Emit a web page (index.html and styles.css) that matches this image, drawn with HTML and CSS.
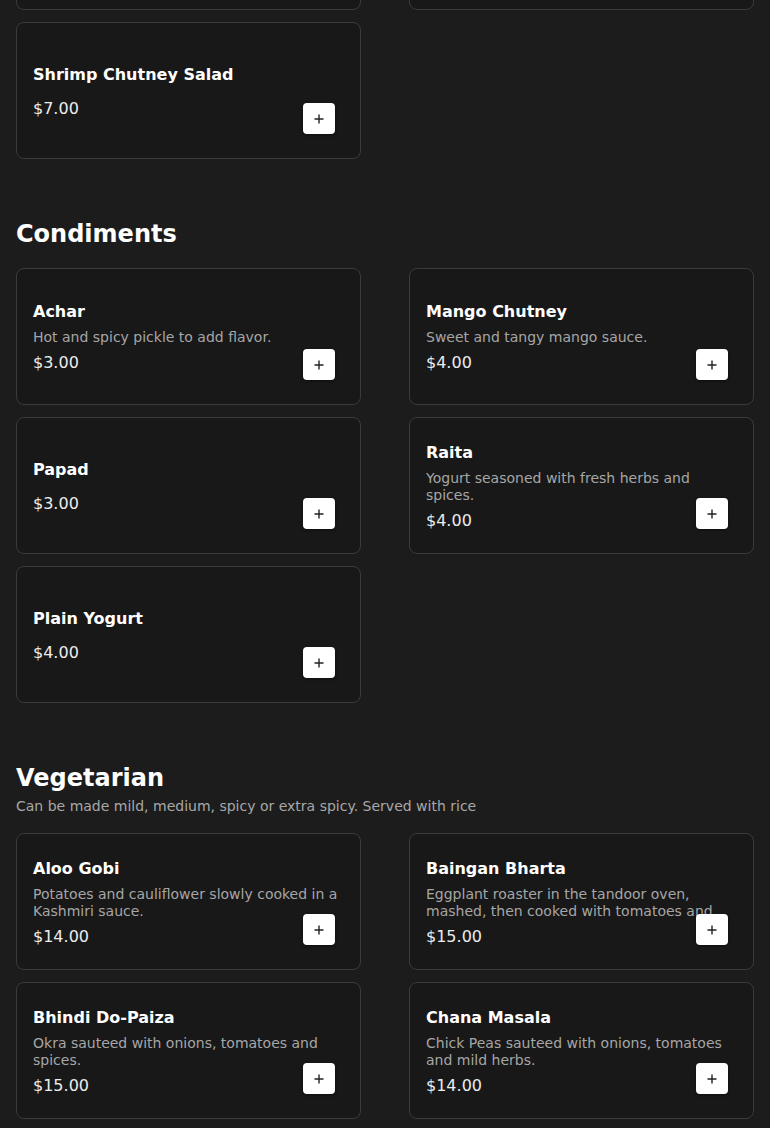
FILE: index.html
```html
<!DOCTYPE html>
<html lang="en">
<head>
<meta charset="utf-8">
<title>Menu</title>
<link rel="stylesheet" href="styles.css">
</head>
<body>
<main class="menu">
  <section class="section section-first">
    <div class="grid">
      <div class="card">
        <div class="card-body">
          <h3 class="item-name">Chicken Chutney Salad</h3>
          <p class="item-desc"></p>
          <p class="item-price">$7.00</p>
        </div>
        <button class="add" aria-label="Add"><svg viewBox="0 0 10 10" width="10" height="10"><path d="M5 0.5V9.5M0.5 5H9.5" stroke="#222" stroke-width="1.4" fill="none"/></svg></button>
      </div>
      <div class="card">
        <div class="card-body">
          <h3 class="item-name">Lamb Chutney Salad</h3>
          <p class="item-desc"></p>
          <p class="item-price">$7.00</p>
        </div>
        <button class="add" aria-label="Add"><svg viewBox="0 0 10 10" width="10" height="10"><path d="M5 0.5V9.5M0.5 5H9.5" stroke="#222" stroke-width="1.4" fill="none"/></svg></button>
      </div>
      <div class="card">
        <div class="card-body">
          <h3 class="item-name">Shrimp Chutney Salad</h3>
          <p class="item-desc"></p>
          <p class="item-price">$7.00</p>
        </div>
        <button class="add" aria-label="Add"><svg viewBox="0 0 10 10" width="10" height="10"><path d="M5 0.5V9.5M0.5 5H9.5" stroke="#222" stroke-width="1.4" fill="none"/></svg></button>
      </div>
    </div>
  </section>

  <section class="section">
    <header class="section-head">
      <h2 class="section-title">Condiments</h2>
    </header>
    <div class="grid">
      <div class="card">
        <div class="card-body">
          <h3 class="item-name">Achar</h3>
          <p class="item-desc">Hot and spicy pickle to add flavor.</p>
          <p class="item-price">$3.00</p>
        </div>
        <button class="add" aria-label="Add"><svg viewBox="0 0 10 10" width="10" height="10"><path d="M5 0.5V9.5M0.5 5H9.5" stroke="#222" stroke-width="1.4" fill="none"/></svg></button>
      </div>
      <div class="card">
        <div class="card-body">
          <h3 class="item-name">Mango Chutney</h3>
          <p class="item-desc">Sweet and tangy mango sauce.</p>
          <p class="item-price">$4.00</p>
        </div>
        <button class="add" aria-label="Add"><svg viewBox="0 0 10 10" width="10" height="10"><path d="M5 0.5V9.5M0.5 5H9.5" stroke="#222" stroke-width="1.4" fill="none"/></svg></button>
      </div>
      <div class="card">
        <div class="card-body">
          <h3 class="item-name">Papad</h3>
          <p class="item-desc"></p>
          <p class="item-price">$3.00</p>
        </div>
        <button class="add" aria-label="Add"><svg viewBox="0 0 10 10" width="10" height="10"><path d="M5 0.5V9.5M0.5 5H9.5" stroke="#222" stroke-width="1.4" fill="none"/></svg></button>
      </div>
      <div class="card">
        <div class="card-body">
          <h3 class="item-name">Raita</h3>
          <p class="item-desc">Yogurt seasoned with fresh herbs and spices.</p>
          <p class="item-price">$4.00</p>
        </div>
        <button class="add" aria-label="Add"><svg viewBox="0 0 10 10" width="10" height="10"><path d="M5 0.5V9.5M0.5 5H9.5" stroke="#222" stroke-width="1.4" fill="none"/></svg></button>
      </div>
      <div class="card">
        <div class="card-body">
          <h3 class="item-name">Plain Yogurt</h3>
          <p class="item-desc"></p>
          <p class="item-price">$4.00</p>
        </div>
        <button class="add" aria-label="Add"><svg viewBox="0 0 10 10" width="10" height="10"><path d="M5 0.5V9.5M0.5 5H9.5" stroke="#222" stroke-width="1.4" fill="none"/></svg></button>
      </div>
    </div>
  </section>

  <section class="section">
    <header class="section-head">
      <h2 class="section-title">Vegetarian</h2>
      <p class="section-sub">Can be made mild, medium, spicy or extra spicy. Served with rice</p>
    </header>
    <div class="grid">
      <div class="card">
        <div class="card-body">
          <h3 class="item-name">Aloo Gobi</h3>
          <p class="item-desc">Potatoes and cauliflower slowly cooked in a Kashmiri sauce.</p>
          <p class="item-price">$14.00</p>
        </div>
        <button class="add" aria-label="Add"><svg viewBox="0 0 10 10" width="10" height="10"><path d="M5 0.5V9.5M0.5 5H9.5" stroke="#222" stroke-width="1.4" fill="none"/></svg></button>
      </div>
      <div class="card">
        <div class="card-body">
          <h3 class="item-name">Baingan Bharta</h3>
          <p class="item-desc">Eggplant roaster in the tandoor oven, mashed, then cooked with tomatoes and onions.</p>
          <p class="item-price">$15.00</p>
        </div>
        <button class="add" aria-label="Add"><svg viewBox="0 0 10 10" width="10" height="10"><path d="M5 0.5V9.5M0.5 5H9.5" stroke="#222" stroke-width="1.4" fill="none"/></svg></button>
      </div>
      <div class="card">
        <div class="card-body">
          <h3 class="item-name">Bhindi Do-Paiza</h3>
          <p class="item-desc">Okra sauteed with onions, tomatoes and spices.</p>
          <p class="item-price">$15.00</p>
        </div>
        <button class="add" aria-label="Add"><svg viewBox="0 0 10 10" width="10" height="10"><path d="M5 0.5V9.5M0.5 5H9.5" stroke="#222" stroke-width="1.4" fill="none"/></svg></button>
      </div>
      <div class="card">
        <div class="card-body">
          <h3 class="item-name">Chana Masala</h3>
          <p class="item-desc">Chick Peas sauteed with onions, tomatoes and mild herbs.</p>
          <p class="item-price">$14.00</p>
        </div>
        <button class="add" aria-label="Add"><svg viewBox="0 0 10 10" width="10" height="10"><path d="M5 0.5V9.5M0.5 5H9.5" stroke="#222" stroke-width="1.4" fill="none"/></svg></button>
      </div>
      <div class="card">
        <div class="card-body">
          <h3 class="item-name">Dal Makhani</h3>
          <p class="item-desc">Black lentils simmered with butter and cream.</p>
          <p class="item-price">$14.00</p>
        </div>
        <button class="add" aria-label="Add"><svg viewBox="0 0 10 10" width="10" height="10"><path d="M5 0.5V9.5M0.5 5H9.5" stroke="#222" stroke-width="1.4" fill="none"/></svg></button>
      </div>
    </div>
  </section>
</main>
</body>
</html>
```

FILE: styles.css
```css
* {
  box-sizing: border-box;
}

html, body {
  margin: 0;
  padding: 0;
  background: #1c1c1c;
}

body {
  font-family: "DejaVu Sans", "Noto Sans", sans-serif;
  color: #ffffff;
}

.menu {
  padding: 0 16px;
}

.section {
  margin-top: 59px;
}

.section-first {
  margin-top: -127px;
}

.section-head {
  margin-bottom: 18px;
}

.section-title {
  margin: 0;
  font-size: 24px;
  line-height: 32px;
  font-weight: 700;
  color: #ffffff;
}

.section-sub {
  margin: 4px 0 0;
  font-size: 14px;
  line-height: 17px;
  color: #a8a8a8;
}

.grid {
  display: grid;
  grid-template-columns: 1fr 1fr;
  column-gap: 48px;
  row-gap: 12px;
}

.card {
  position: relative;
  height: 137px;
  background: #181818;
  border: 1px solid #3b3b3b;
  border-radius: 8px;
  padding: 1px 16px 0;
  display: flex;
  flex-direction: column;
  justify-content: center;
}

.card-body {
  display: flex;
  flex-direction: column;
}

.item-name {
  margin: 0 0 8px;
  font-size: 16px;
  line-height: 19px;
  font-weight: 700;
  color: #ffffff;
}

.item-desc {
  margin: 0 0 7px;
  font-size: 14px;
  line-height: 17px;
  max-height: 34px;
  overflow: hidden;
  color: #a6a6a6;
}

.item-price {
  margin: 0;
  font-size: 16px;
  line-height: 19px;
  color: #ececec;
}

.add {
  position: absolute;
  right: 25px;
  bottom: 24px;
  width: 32px;
  height: 31px;
  padding: 0;
  border: none;
  border-radius: 4px;
  background: #ffffff;
  box-shadow: 0 1px 3px rgba(0, 0, 0, 0.5);
  display: flex;
  align-items: center;
  justify-content: center;
  cursor: pointer;
}

.add svg {
  display: block;
}
```
